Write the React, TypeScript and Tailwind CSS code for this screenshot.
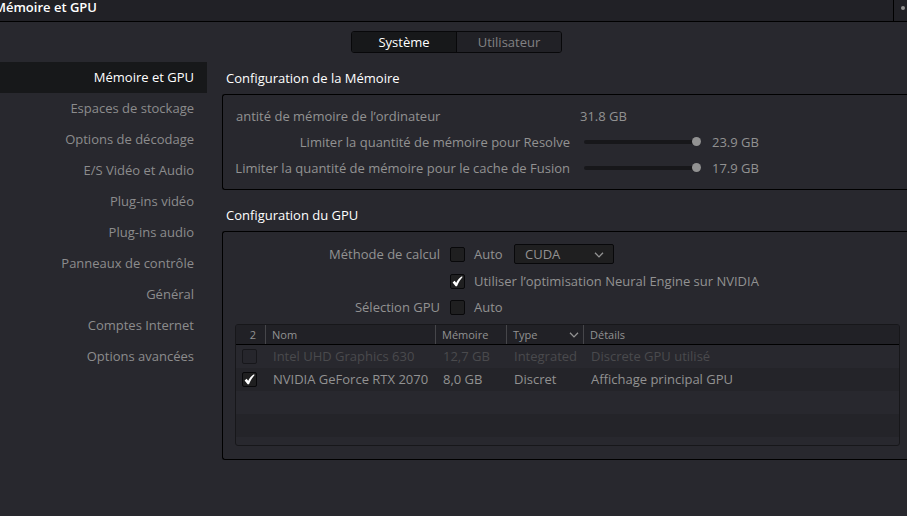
import { useState, type ReactNode } from "react";

const sections = [
  "Mémoire et GPU",
  "Espaces de stockage",
  "Options de décodage",
  "E/S Vidéo et Audio",
  "Plug-ins vidéo",
  "Plug-ins audio",
  "Panneaux de contrôle",
  "Général",
  "Comptes Internet",
  "Options avancées",
];

const gpus = [
  { name: "Intel UHD Graphics 630", memory: "12,7 GB", type: "Integrated", details: "Discrete GPU utilisé", enabled: false },
  { name: "NVIDIA GeForce RTX 2070", memory: "8,0 GB", type: "Discret", details: "Affichage principal GPU", enabled: true },
];

function Chevron({ className }: { className?: string }) {
  return (
    <svg aria-hidden="true" width="10" height="6" viewBox="0 0 10 6" fill="none" stroke="currentColor" strokeWidth="1.3" className={className}>
      <path d="M1 0.8 5 4.9 9 0.8" />
    </svg>
  );
}

function Checkbox({ id, label, initial = false, disabled = false }: { id: string; label?: string; initial?: boolean; disabled?: boolean }) {
  const [checked, setChecked] = useState(initial);
  return (
    <span className={`relative block size-[15px] shrink-0 ${disabled ? "opacity-50" : ""}`}>
      <input
        id={id}
        type="checkbox"
        aria-label={label}
        checked={checked}
        disabled={disabled}
        onChange={(e) => setChecked(e.target.checked)}
        className={`block size-[15px] appearance-none rounded-[2px] border border-[#08080a] ${disabled ? "bg-[#26262b]" : "bg-[#1f1f20]"}`}
      />
      {checked && (
        <svg aria-hidden="true" viewBox="0 0 15 15" className="pointer-events-none absolute inset-0 size-[15px]">
          <path d="M2.6 8.4 4.6 6.8 6.2 8.8C7.6 6 9.4 3.7 12 2.2L12.6 2.9C10.4 5.2 8.6 8.3 7 12.2H5.6Z" fill="#fff" />
        </svg>
      )}
    </span>
  );
}

function Group({ title, children, className = "" }: { title: string; children: ReactNode; className?: string }) {
  return (
    <section className={className}>
      <h2 className="flex h-8 items-center pl-1 text-white">{title}</h2>
      <div className="rounded-l-[3px] border border-r-0 border-black">{children}</div>
    </section>
  );
}

function MemorySlider({ id, label, value }: { id: string; label: string; value: string }) {
  return (
    <div className="flex h-[26px] items-center">
      <label htmlFor={id} className="w-[347px] text-right whitespace-nowrap">{label}</label>
      <input
        id={id}
        type="range"
        defaultValue={100}
        className="ml-3.5 h-[10px] w-[117px] appearance-none bg-transparent [&::-webkit-slider-runnable-track]:h-1 [&::-webkit-slider-runnable-track]:rounded-full [&::-webkit-slider-runnable-track]:bg-[#17171a] [&::-webkit-slider-thumb]:-mt-[3px] [&::-webkit-slider-thumb]:size-[9px] [&::-webkit-slider-thumb]:appearance-none [&::-webkit-slider-thumb]:rounded-full [&::-webkit-slider-thumb]:bg-[#929292]"
      />
      <output htmlFor={id} className="ml-[11px] whitespace-nowrap">{value}</output>
    </div>
  );
}

export default function App() {
  const [section, setSection] = useState(0);
  const [tab, setTab] = useState(0);

  return (
    <div className="min-h-screen overflow-hidden bg-[#28282e] font-['Open_Sans',sans-serif] text-[13px] leading-5 text-[#929292]">
      <header className="flex h-[22px] border-b border-black bg-[#212126]">
        <h1 className="-ml-1.5 h-[15px] flex-1 leading-[15px] font-semibold text-white">Mémoire et GPU</h1>
        <button type="button" aria-label="Plus d’options" className="w-3.5 border-l border-black pb-1.5">
          <span className="ml-[7px] block size-1 rounded-full bg-[#929292]" />
        </button>
      </header>

      <div className="flex justify-center py-[9px] pl-1.5">
        <div className="flex h-[22px] w-[211px] overflow-hidden rounded-[3px] border border-[#08080a]">
          {["Système", "Utilisateur"].map((name, i) => (
            <button
              key={name}
              type="button"
              aria-pressed={tab === i}
              onClick={() => setTab(i)}
              className={`flex flex-1 items-center justify-center not-first:border-l not-first:border-[#08080a] ${tab === i ? "bg-[#17181a] text-white" : "bg-[#212126] text-[#828284]"}`}
            >
              {name}
            </button>
          ))}
        </div>
      </div>

      <div className="flex">
        <nav className="flex w-[207px] shrink-0 flex-col">
          {sections.map((name, i) => (
            <button
              key={name}
              type="button"
              aria-current={section === i ? "page" : undefined}
              onClick={() => setSection(i)}
              className={`flex h-[31px] items-center justify-end pr-[13px] pb-0.5 ${section === i ? "bg-[#17181a] text-white" : "text-[#8c8c8d]"}`}
            >
              {name}
            </button>
          ))}
        </nav>

        <main className="ml-[15px] min-w-0 flex-1">
          <Group title="Configuration de la Mémoire">
            <div className="py-2">
              <div className="flex h-[26px] items-center pl-[13px]">
                <span className="w-[344px] whitespace-nowrap">antité de mémoire de l’ordinateur</span>
                <span>31.8 GB</span>
              </div>
              <MemorySlider id="limit-resolve" label="Limiter la quantité de mémoire pour Resolve" value="23.9 GB" />
              <MemorySlider id="limit-fusion" label="Limiter la quantité de mémoire pour le cache de Fusion" value="17.9 GB" />
            </div>
          </Group>

          <Group title="Configuration du GPU" className="mt-[9px]">
            <div className="pt-[9px] pr-[7px] pb-[13px] pl-3">
              <div className="mb-px flex h-[26px] items-center">
                <span className="mr-2.5 w-[205px] text-right">Méthode de calcul</span>
                <Checkbox id="compute-auto" />
                <label htmlFor="compute-auto" className="w-[49px] pl-[9px]">Auto</label>
                <span className="relative block h-5 w-[100px]">
                  <select aria-label="Méthode de calcul" className="block h-5 w-full appearance-none rounded-[2px] border border-[#08080a] bg-[#1f1f20] pl-2.5 leading-[18px]">
                    <option>CUDA</option>
                    <option>OpenCL</option>
                  </select>
                  <Chevron className="pointer-events-none absolute top-2 right-2.5" />
                </span>
              </div>
              <div className="flex h-[26px] items-center">
                <span className="mr-2.5 w-[205px]" />
                <Checkbox id="neural" initial />
                <label htmlFor="neural" className="pl-[9px] whitespace-nowrap">Utiliser l’optimisation Neural Engine sur NVIDIA</label>
              </div>
              <div className="flex h-[26px] items-center">
                <span className="mr-2.5 w-[205px] text-right">Sélection GPU</span>
                <Checkbox id="gpu-auto" />
                <label htmlFor="gpu-auto" className="pl-[9px]">Auto</label>
              </div>

              <div className="mt-1 h-[122px] overflow-hidden rounded-[3px] border border-[#17171a]">
                <table className="w-full table-fixed border-separate border-spacing-0 text-left whitespace-nowrap">
                  <colgroup>
                    <col className="w-[30px]" />
                    <col className="w-[170px]" />
                    <col className="w-[71px]" />
                    <col className="w-[77px]" />
                    <col />
                  </colgroup>
                  <thead className="bg-[#212126] text-[11px] leading-[19px] [&_th]:h-5 [&_th]:border-b [&_th]:border-black [&_th]:p-0 [&_th]:font-normal">
                    <tr>
                      <th><span className="block border-r border-[#46464a] pr-[9px] text-right">2</span></th>
                      <th><span className="block border-r border-[#46464a] pl-1.5">Nom</span></th>
                      <th><span className="block border-r border-[#46464a] pl-1.5">Mémoire</span></th>
                      <th aria-sort="descending">
                        <span className="flex items-center justify-between border-r border-[#46464a] pr-1 pl-1.5">Type<Chevron /></span>
                      </th>
                      <th><span className="block pl-1.5">Détails</span></th>
                    </tr>
                  </thead>
                  <tbody className="[&_td]:h-[23px] [&_tr]:even:bg-[#242429]">
                    {gpus.map((gpu) => (
                      <tr key={gpu.name} className={gpu.enabled ? "" : "text-[#4a4a4d]"}>
                        <td className="p-0 pl-1.5"><Checkbox id={gpu.name} label={gpu.name} initial={gpu.enabled} disabled={!gpu.enabled} /></td>
                        <td className="p-0 pb-0.5 pl-[7px]">{gpu.name}</td>
                        <td className="p-0 pb-0.5 pl-[7px]">{gpu.memory}</td>
                        <td className="p-0 pb-0.5 pl-[7px]">{gpu.type}</td>
                        <td className="p-0 pb-0.5 pl-[7px]">{gpu.details}</td>
                      </tr>
                    ))}
                    <tr><td colSpan={5} /></tr>
                    <tr><td colSpan={5} /></tr>
                  </tbody>
                </table>
              </div>
            </div>
          </Group>
        </main>
      </div>
    </div>
  );
}
